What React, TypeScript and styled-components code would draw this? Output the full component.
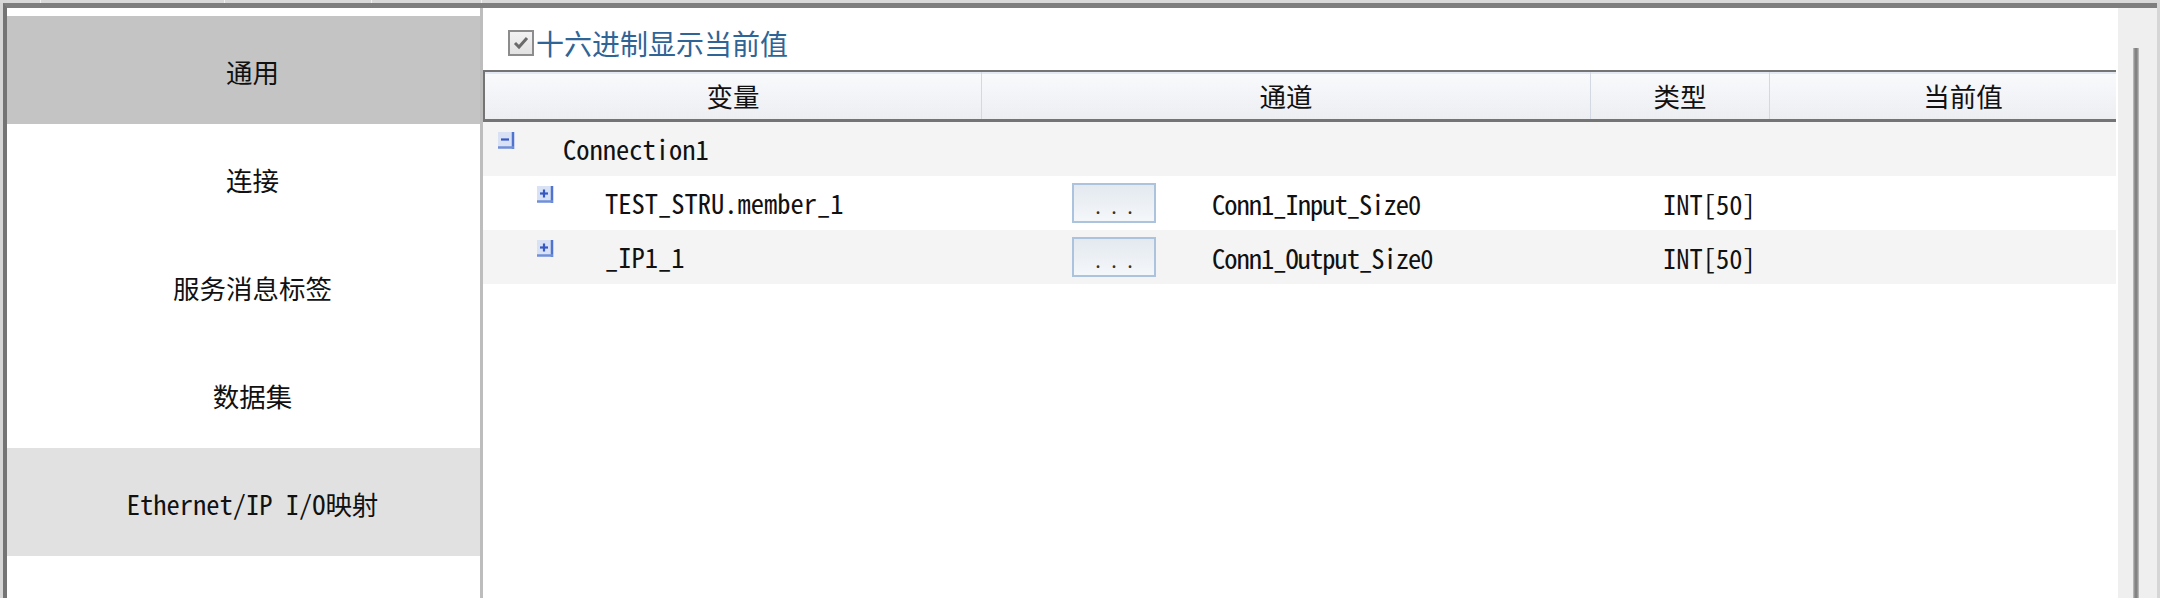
import React from 'react';
import styled, { createGlobalStyle } from 'styled-components';

const GlobalStyle = createGlobalStyle`
  html, body { margin: 0; padding: 0; height: 100%; overflow: hidden; background: #d6d6d6; }
  #root { height: 100%; }
`;

const MONO = `"Noto Sans Mono CJK SC", "Noto Sans CJK SC", "Liberation Mono", monospace`;
const CJK = `"Noto Sans CJK SC", "Noto Sans", sans-serif`;

const Page = styled.div`
  height: 598px;
  display: flex;
  flex-direction: column;
  background: #d6d6d6;
`;

const TabStrip = styled.div`
  height: 3px;
  display: flex;
  background: #d9d9d9;
`;

const TabEdge = styled.div<{ $w: number }>`
  width: ${p => p.$w}px;
  border-right: 1px solid #f2f2f2;
  box-sizing: border-box;
`;

const Body = styled.div`
  flex: 1;
  display: flex;
  padding: 0 3px 0 3px;
  min-height: 0;
`;

const Frame = styled.div`
  flex: 1;
  display: flex;
  border-top: 5px solid #7e7e7e;
  border-left: 4px solid #747474;
  min-height: 0;
  overflow: hidden;
`;

const Sidebar = styled.div`
  width: 473px;
  flex: none;
  background: #fff;
  border-right: 3px solid #bdbdbd;
  padding-top: 8px;
  display: flex;
  flex-direction: column;
`;

const SideItem = styled.div<{ $bg: string }>`
  height: 108px;
  flex: none;
  display: flex;
  align-items: center;
  justify-content: center;
  padding-left: 18px;
  padding-top: 3px;
  box-sizing: border-box;
  background: ${p => p.$bg};
  font-family: ${MONO};
  font-size: 26.5px;
  color: #111;
  white-space: nowrap;
`;

const Panel = styled.div`
  flex: 1;
  background: #fff;
  display: flex;
  flex-direction: column;
  min-width: 0;
`;

const OptionRow = styled.div`
  height: 62px;
  box-sizing: border-box;
  padding: 8px 0 0 25px;
  display: flex;
  align-items: center;
  gap: 2px;
`;

const CheckBox = styled.div`
  width: 26px;
  height: 26px;
  box-sizing: border-box;
  border: 2px solid #8c8c8c;
  background: linear-gradient(#f2f2f2, #e2e2e2);
  display: flex;
  align-items: center;
  justify-content: center;
`;

const OptionLabel = styled.span`
  font-family: ${CJK};
  font-size: 28px;
  color: #2f6496;
  line-height: 1;
`;

const Table = styled.div`
  margin-right: 2px;
  display: flex;
  flex-direction: column;
`;

const Header = styled.div`
  display: grid;
  grid-template-columns: 497px 609px 179px 1fr;
  height: 47px;
  border-top: 2px solid #747474;
  border-left: 2px solid #747474;
  border-bottom: 3px solid #747474;
  background: linear-gradient(#f9fafc, #eceef2);
  box-shadow: inset 0 2px 0 #e2e9f3;
`;

const HeaderCell = styled.div<{ $last?: boolean; $pl?: number }>`
  display: flex;
  align-items: center;
  justify-content: center;
  padding-left: ${p => p.$pl ?? 0}px;
  border-right: ${p => (p.$last ? 'none' : '1px solid #d3d9e3')};
  font-family: ${MONO};
  font-size: 26.5px;
  color: #111;
`;

const Row = styled.div<{ $alt: boolean }>`
  display: grid;
  grid-template-columns: 497px 609px 179px 1fr;
  height: 54px;
  padding-left: 2px;
  background: ${p => (p.$alt ? '#f4f4f4' : '#ffffff')};
  font-family: ${MONO};
  font-size: 26.5px;
  color: #111;
`;

const NameCell = styled.div<{ $indent: number }>`
  display: flex;
  align-items: center;
  padding-left: ${p => p.$indent}px;
  padding-bottom: 2px;
  white-space: nowrap;
`;

const ToggleIcon = styled.svg`
  align-self: flex-start;
  margin-top: 9px;
  width: 19px;
  height: 19px;
  flex: none;
`;

const NameText = styled.span<{ $gap: number }>`
  margin-left: ${p => p.$gap}px;
`;

const ChannelCell = styled.div`
  display: flex;
  align-items: center;
  white-space: nowrap;
`;

const DotsButton = styled.div`
  margin-left: 90px;
  width: 84px;
  height: 40px;
  box-sizing: border-box;
  border: 2px solid #abc3dd;
  background: linear-gradient(#e3e9ef, #f4f7fa);
  display: flex;
  align-items: center;
  justify-content: center;
  padding-top: 4px;
  font-family: ${MONO};
  font-size: 20px;
  letter-spacing: 6px;
  padding-left: 6px;
  color: #333;
`;

const ChannelText = styled.span`
  margin-left: 56px;
  letter-spacing: -1px;
`;

const TypeCell = styled.div`
  display: flex;
  align-items: center;
  padding-left: 72px;
  white-space: nowrap;
`;

const Scrollbar = styled.div`
  width: 39px;
  flex: none;
  background: #efefef;
  display: flex;
  flex-direction: column;
  padding: 40px 0 0 15px;
  box-sizing: border-box;
`;

const Thumb = styled.div`
  width: 6px;
  flex: 1;
  background: linear-gradient(to right, #c4c4c4, #8c8c8c 30%, #7c7c7c 50%, #8c8c8c 70%, #c4c4c4);
`;

const Toggle: React.FC<{ open: boolean }> = ({ open }) => (
  <ToggleIcon viewBox="0 0 19 19">
    <rect x="1" y="1" width="16" height="16" fill="#d9e1f4" />
    <line x1="16" y1="1" x2="16" y2="18" stroke="#4f73cf" strokeWidth="2.5" />
    <line x1="1" y1="16.5" x2="17" y2="16.5" stroke="#6f8fd8" strokeWidth="2.5" />
    <line x1="4" y1="8.5" x2="12" y2="8.5" stroke="#3558c2" strokeWidth="2.2" />
    {!open && <line x1="8" y1="4.5" x2="8" y2="12.5" stroke="#3558c2" strokeWidth="2.2" />}
  </ToggleIcon>
);

const sideItems = [
  { label: '通用', bg: '#c4c4c4' },
  { label: '连接', bg: '#ffffff' },
  { label: '服务消息标签', bg: '#ffffff' },
  { label: '数据集', bg: '#ffffff' },
  { label: 'Ethernet/IP I/O映射', bg: '#e1e1e1' },
  { label: '状态', bg: '#ffffff' },
];

const rows = [
  { level: 0, open: true, name: 'Connection1', channel: '', type: '', button: false },
  { level: 1, open: false, name: 'TEST_STRU.member_1', channel: 'Conn1_Input_Size0', type: 'INT[50]', button: true },
  { level: 1, open: false, name: '_IP1_1', channel: 'Conn1_Output_Size0', type: 'INT[50]', button: true },
];

export default function App() {
  return (
    <>
      <GlobalStyle />
      <Page>
        <TabStrip>
          <TabEdge $w={41} />
          <TabEdge $w={184} />
          <TabEdge $w={147} />
          <TabEdge $w={110} />
        </TabStrip>
        <Body>
          <Frame>
            <Sidebar>
              {sideItems.map(it => (
                <SideItem key={it.label} $bg={it.bg}>{it.label}</SideItem>
              ))}
            </Sidebar>
            <Panel>
              <OptionRow>
                <CheckBox>
                  <svg width="18" height="18" viewBox="0 0 18 18">
                    <path d="M3 9 L7 13 L15 4" fill="none" stroke="#6b6b6b" strokeWidth="3" />
                  </svg>
                </CheckBox>
                <OptionLabel>十六进制显示当前值</OptionLabel>
              </OptionRow>
              <Table>
                <Header>
                  <HeaderCell>变量</HeaderCell>
                  <HeaderCell>通道</HeaderCell>
                  <HeaderCell>类型</HeaderCell>
                  <HeaderCell $last $pl={40}>当前值</HeaderCell>
                </Header>
                {rows.map((r, i) => (
                  <Row key={r.name} $alt={i % 2 === 0}>
                    <NameCell $indent={r.level === 0 ? 12 : 51}>
                      <Toggle open={r.open} />
                      <NameText $gap={r.level === 0 ? 47 : 50}>{r.name}</NameText>
                    </NameCell>
                    <ChannelCell>
                      {r.button && <DotsButton>...</DotsButton>}
                      {r.channel && <ChannelText>{r.channel}</ChannelText>}
                    </ChannelCell>
                    <TypeCell>{r.type}</TypeCell>
                    <div />
                  </Row>
                ))}
              </Table>
            </Panel>
            <Scrollbar>
              <Thumb />
            </Scrollbar>
          </Frame>
        </Body>
      </Page>
    </>
  );
}
